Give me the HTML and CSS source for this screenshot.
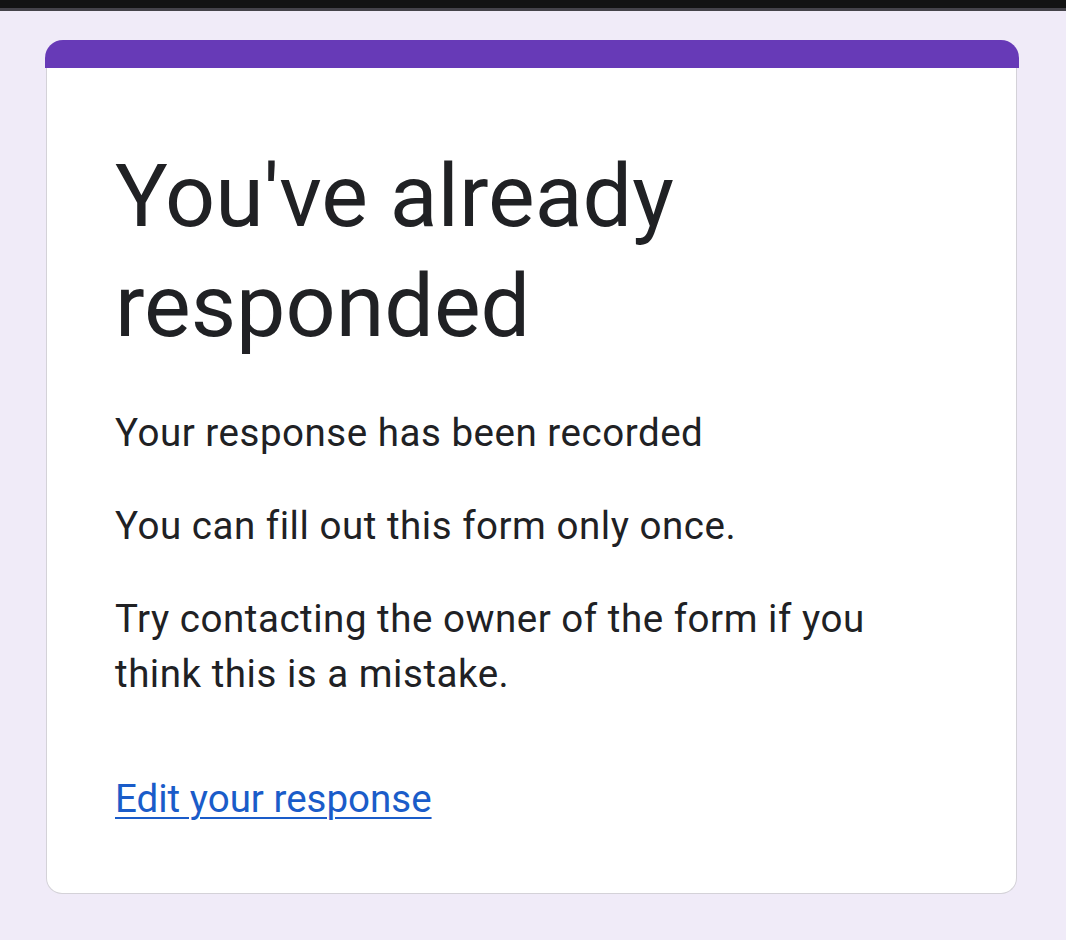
FILE: index.html
```html
<!DOCTYPE html>
<html lang="en">
<head>
<meta charset="utf-8">
<title>You've already responded</title>
<link rel="stylesheet" href="styles.css">
</head>
<body>
<div class="topbar"></div>
<main class="page">
  <section class="card">
    <div class="card-accent"></div>
    <div class="card-body">
      <h1 class="title">You've already responded</h1>
      <p class="msg">Your response has been recorded</p>
      <p class="msg">You can fill out this form only once.</p>
      <p class="msg">Try contacting the owner of the form if you think this is a mistake.</p>
      <a class="edit-link" href="#">Edit your response</a>
    </div>
  </section>
</main>
</body>
</html>
```

FILE: styles.css
```css
html, body {
  margin: 0;
  padding: 0;
}
body {
  background: #f0ebf8;
  font-family: Roboto, "Liberation Sans", Arial, sans-serif;
  color: #202124;
  min-height: 940px;
}
.topbar {
  height: 8px;
  background: #131313;
  border-bottom: 3px solid #45434a;
}
.page {
  padding: 29px 47px 0 45px;
}
.card {
  display: flex;
  flex-direction: column;
}
.card-accent {
  height: 28px;
  background: #673ab7;
  border-radius: 18px 18px 0 0;
}
.card-body {
  margin: 0 2px 0 1px;
  background: #fff;
  border: 1.5px solid #d4d2d8;
  border-top: none;
  border-radius: 0 0 16px 16px;
  padding: 73px 68px 67px 68px;
  display: flex;
  flex-direction: column;
  align-items: flex-start;
}
.title {
  margin: 0 0 44px 0;
  font-size: 88px;
  line-height: 110px;
  font-weight: 400;
  color: #202124;
}
.msg {
  margin: 0 0 38px 0;
  font-size: 38.5px;
  line-height: 55px;
  letter-spacing: 0.53px;
  color: #202124;
}
.msg:last-of-type {
  margin-bottom: 70px;
}
.edit-link {
  font-size: 38.5px;
  line-height: 55px;
  color: #1a5cc9;
  text-decoration: underline;
  text-decoration-thickness: 2px;
  text-underline-offset: 5px;
}
```
